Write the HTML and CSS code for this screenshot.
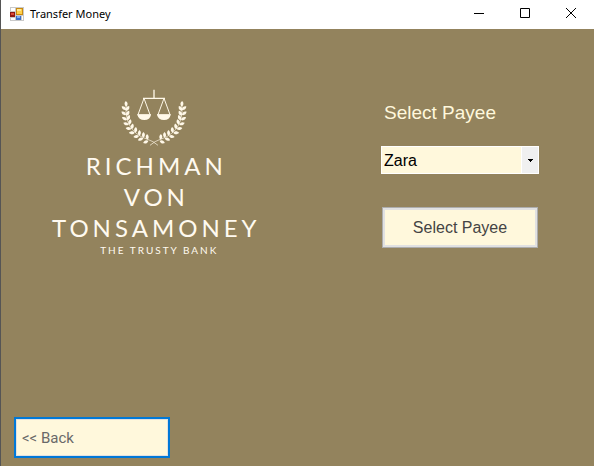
FILE: index.html
```html
<!DOCTYPE html>
<html lang="en">
<head>
<meta charset="utf-8">
<title>Transfer Money</title>
<link rel="stylesheet" href="styles.css">
</head>
<body>
<div class="window">
  <header class="titlebar">
    <svg class="app-icon" viewBox="0 0 14 14" width="14" height="14" aria-hidden="true">
      <path fill="#c9c9c9" d="M0 0h14v14H0z"/>
      <path fill="#fff" d="M1 1h4v3H1zM1 11h4v2H1zM12 9h1v4h-1z"/>
      <path fill="#8e1a12" d="M0 5h5v5H0z"/>
      <path fill="#dd4a38" d="M1 6h3v2H1z"/>
      <path fill="#c98a10" d="M6 1h7v7H6z"/>
      <path fill="#ffd04a" d="M7 2h5v5H7z"/>
      <path fill="#ffe898" d="M7 2h4v2H7z"/>
      <path fill="#3a6fc9" d="M6 9h5v4H6z"/>
      <path fill="#7fb0f5" d="M7 9h3v2H7z"/>
    </svg>
    <h1 class="title">Transfer Money</h1>
    <div class="window-controls">
      <button class="control" type="button" aria-label="Minimize">
        <svg viewBox="0 0 10 10" width="10" height="10"><path d="M0 5.500h10"/></svg>
      </button>
      <button class="control" type="button" aria-label="Maximize">
        <svg viewBox="0 0 10 10" width="10" height="10"><path d="M.5.5h9v9h-9z"/></svg>
      </button>
      <button class="control" type="button" aria-label="Close">
        <svg viewBox="0 0 10 10" width="10" height="10"><path d="M0 0l10 10M10 0L0 10"/></svg>
      </button>
    </div>
  </header>

  <main class="content">
    <div class="brand">
      <svg class="emblem" viewBox="29 24 204 177" width="68" height="59" aria-hidden="true">
        <defs>
          <path id="leaf" d="M0 0C2-7 9-10 16-6C13 2 6 4 0 0z"/>
          <g id="branch">
            <path class="stem" d="M48 70C42 118 58 160 112 178Q128 183 143 196"/>
            <use href="#leaf" transform="translate(48 80) rotate(-75)"/>
            <use href="#leaf" transform="translate(47 90) rotate(-118)"/>
            <use href="#leaf" transform="translate(47 92) rotate(-36)"/>
            <use href="#leaf" transform="translate(47 105) rotate(-122)"/>
            <use href="#leaf" transform="translate(48 107) rotate(-40)"/>
            <use href="#leaf" transform="translate(50 120) rotate(-132)"/>
            <use href="#leaf" transform="translate(51 121) rotate(-46)"/>
            <use href="#leaf" transform="translate(55 134) rotate(-140)"/>
            <use href="#leaf" transform="translate(56 134) rotate(-52)"/>
            <use href="#leaf" transform="translate(63 147) rotate(-150)"/>
            <use href="#leaf" transform="translate(64 147) rotate(-58)"/>
            <use href="#leaf" transform="translate(73 158) rotate(-160)"/>
            <use href="#leaf" transform="translate(75 158) rotate(-64)"/>
            <use href="#leaf" transform="translate(86 168) rotate(-170)"/>
            <use href="#leaf" transform="translate(87 167) rotate(-68)"/>
            <use href="#leaf" transform="translate(99 175) rotate(-178)"/>
            <use href="#leaf" transform="translate(99 173) rotate(-68)"/>
            <use href="#leaf" transform="translate(114 182) rotate(-184)"/>
            <use href="#leaf" transform="translate(111 179) rotate(-72)"/>
          </g>
        </defs>
        <use href="#branch"/>
        <use href="#branch" transform="translate(262 0) scale(-1 1)"/>
        <path class="beam" d="M131 29v26M98 55h66"/>
        <path class="chain" d="M101 55L83 104M101 55L119 104M161 55L143 104M161 55L179 104"/>
        <path class="chain" d="M81 104h41M140 104h41"/>
        <path d="M81 104h41q-3 16-20 16t-21-16zM140 104h41q-3 16-20 16t-21-16z"/>
      </svg>
      <p class="brand-name">RICHMAN<br>VON<br>TONSAMONEY</p>
      <p class="tagline">THE TRUSTY BANK</p>
    </div>

    <form class="payee-form">
      <label class="payee-label" for="payee">Select Payee</label>
      <div class="dropdown">
        <select class="payee-select" id="payee"><option>Zara</option></select>
        <span class="dropdown-arrow">
          <svg viewBox="0 0 5 3" width="5" height="3" shape-rendering="crispEdges" aria-hidden="true"><path d="M0 0h5v1H4v1H3v1H2V2H1V1H0z"/></svg>
        </span>
      </div>
      <button class="button" type="button">Select Payee</button>
    </form>
  </main>

  <footer class="footer">
    <button class="button button-back" type="button">&lt;&lt; Back</button>
  </footer>
</div>
</body>
</html>
```

FILE: styles.css
```css
* {
  box-sizing: border-box;
}

body {
  margin: 0;
  font-family: "Liberation Sans", Arial, sans-serif;
}

.window {
  display: flex;
  flex-direction: column;
  min-height: 100vh;
  background: #93835d;
  border-left: 1px solid #555;
}

.titlebar {
  display: flex;
  align-items: center;
  height: 29px;
  padding: 0 0 2px 9px;
  background: #fff;
}

.title {
  flex: 1;
  margin: 0 0 0 6px;
  font: 400 11px/16px "Noto Sans", sans-serif;
  color: #000;
}

.window-controls {
  display: flex;
  align-self: flex-start;
}

.control {
  display: grid;
  place-items: center;
  width: 46px;
  height: 26px;
  padding: 0;
  border: 0;
  background: none;
}

.control path {
  fill: none;
  stroke: #000;
}

.content {
  display: flex;
  flex: 1;
  align-items: flex-start;
  justify-content: space-between;
  padding: 59px 55px 0 51px;
}

.brand {
  display: flex;
  flex-direction: column;
  align-items: center;
  color: #fffaf0;
  font-family: Lato, sans-serif;
  text-align: center;
}

.emblem {
  fill: #fff8e8;
}

.stem,
.beam,
.chain {
  fill: none;
  stroke: #fff8e8;
  stroke-width: 2;
}

.beam {
  stroke-width: 4;
}

.chain {
  stroke-width: 3;
}

.brand-name {
  margin: 3px -4px 0 0;
  font-size: 24px;
  line-height: 31px;
  letter-spacing: 4px;
}

.tagline {
  margin: 0;
  padding-left: 10px;
  font-size: 10px;
  line-height: 14px;
  letter-spacing: 2px;
}

.payee-form {
  display: flex;
  flex-direction: column;
  width: 158px;
  padding-top: 12px;
}

.payee-label {
  padding: 1px 0 0 3px;
  font-size: 19px;
  line-height: 24px;
  color: #fff8dc;
}

.dropdown {
  display: grid;
  margin: 21px 0 33px;
}

.payee-select {
  grid-area: 1 / 1;
  height: 28px;
  padding: 0 20px 0 2px;
  border: 1px solid #fff;
  border-radius: 0;
  appearance: none;
  background: #fff8dc;
  color: #000;
  font: 16px "Liberation Sans", Arial, sans-serif;
}

.dropdown-arrow {
  display: grid;
  grid-area: 1 / 1;
  place-items: center;
  justify-self: end;
  width: 18px;
  margin: 1px 0;
  border: solid #fff;
  border-width: 0 1px;
  background: #f0f0f0;
  pointer-events: none;
}

.button {
  height: 41px;
  margin: 0 1px;
  border: 1px solid #adadad;
  box-shadow: inset 0 0 0 2px #e1e1e1;
  background: #fff8dc;
  color: #444;
  font: 16px "Liberation Sans", Arial, sans-serif;
}

.footer {
  padding: 0 13px 8px 12px;
}

.button-back {
  width: 156px;
  padding: 0 6px;
  border: 2px solid #0078d7;
  box-shadow: inset 0 0 0 1px #e1e1e1;
  color: #696969;
  font: 15px Roboto, sans-serif;
  text-align: left;
}
```
